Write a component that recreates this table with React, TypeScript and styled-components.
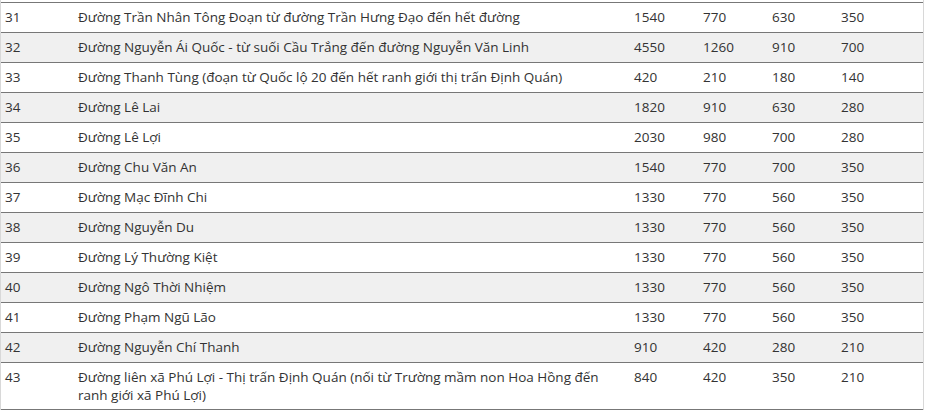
import React from "react";
import styled, { createGlobalStyle } from "styled-components";

const Global = createGlobalStyle`
  html, body { margin: 0; padding: 0; background: #fff; }
  body { font-family: "Open Sans", "Noto Sans", sans-serif; }
`;

const Frame = styled.div`
  width: 924px;
  padding-top: 2px;
  border-left: 1px solid #d8d8d8;
  border-right: 1px solid #d8d8d8;
  box-sizing: border-box;
`;

const Table = styled.table`
  width: 100%;
  border-collapse: collapse;
  table-layout: fixed;
  font-size: 13.5px;
  color: #333;
`;

const Col = styled.col<{ $w?: number }>`
  width: ${(p) => (p.$w ? `${p.$w}px` : "auto")};
`;

const Row = styled.tr<{ $alt: boolean }>`
  background: ${(p) => (p.$alt ? "#f0f0f0" : "#fff")};
  border-top: 1px solid #777;
  border-bottom: 1px solid #777;
`;

const Cell = styled.td`
  vertical-align: top;
  padding: 5px 4px 5px 4px;
  height: 19px;
  line-height: 18px;
`;

type R = [string, string, string, string, string, string];

const rows: R[] = [
  ["31", "Đường Trần Nhân Tông Đoạn từ đường Trần Hưng Đạo đến hết đường", "1540", "770", "630", "350"],
  ["32", "Đường Nguyễn Ái Quốc - từ suối Cầu Trắng đến đường Nguyễn Văn Linh", "4550", "1260", "910", "700"],
  ["33", "Đường Thanh Tùng (đoạn từ Quốc lộ 20 đến hết ranh giới thị trấn Định Quán)", "420", "210", "180", "140"],
  ["34", "Đường Lê Lai", "1820", "910", "630", "280"],
  ["35", "Đường Lê Lợi", "2030", "980", "700", "280"],
  ["36", "Đường Chu Văn An", "1540", "770", "700", "350"],
  ["37", "Đường Mạc Đĩnh Chi", "1330", "770", "560", "350"],
  ["38", "Đường Nguyễn Du", "1330", "770", "560", "350"],
  ["39", "Đường Lý Thường Kiệt", "1330", "770", "560", "350"],
  ["40", "Đường Ngô Thời Nhiệm", "1330", "770", "560", "350"],
  ["41", "Đường Phạm Ngũ Lão", "1330", "770", "560", "350"],
  ["42", "Đường Nguyễn Chí Thanh", "910", "420", "280", "210"],
  ["43", "Đường liên xã Phú Lợi - Thị trấn Định Quán (nối từ Trường mầm non Hoa Hồng đến ranh giới xã Phú Lợi)", "840", "420", "350", "210"],
];

const widths = [73, 556, 69, 69, 69, 0];

export default function App() {
  return (
    <>
      <Global />
      <Frame>
        <Table>
          <colgroup>
            {widths.map((w, i) => (
              <Col key={i} $w={w} />
            ))}
          </colgroup>
          <tbody>
            {rows.map((r, i) => (
              <Row key={r[0]} $alt={i % 2 === 1}>
                {r.map((c, j) => (
                  <Cell key={j}>{c}</Cell>
                ))}
              </Row>
            ))}
          </tbody>
        </Table>
      </Frame>
    </>
  );
}
